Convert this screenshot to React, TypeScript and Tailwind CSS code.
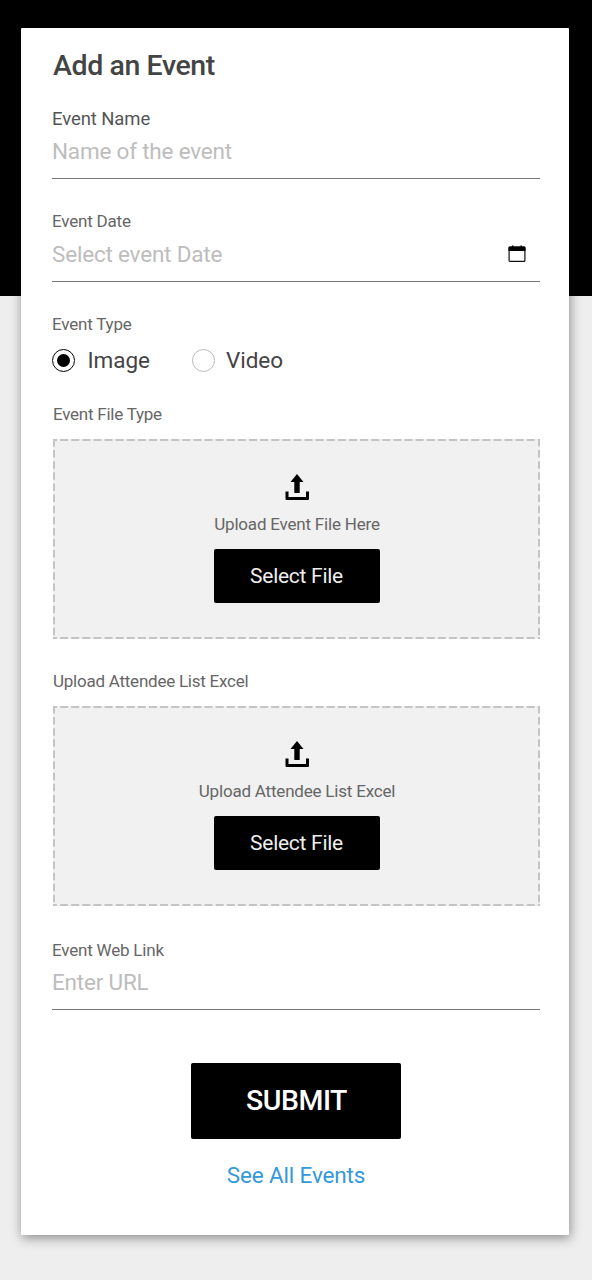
import React from "react";

function Field({ label, placeholder, children, labelClass }: { label: string; placeholder: string; labelClass: string; children?: React.ReactNode }) {
  return (
    <div className="h-[103px]">
      <div className={labelClass}>{label}</div>
      <div className="mt-[4px] flex h-[44px] items-start justify-between border-b border-[#777] pr-[14px]">
        <span className="text-[22.5px] leading-[32px] tracking-[-0.2px] text-[#bdbdbd]">{placeholder}</span>
        {children}
      </div>
    </div>
  );
}

function Upload({ label, caption }: { label: string; caption: string }) {
  return (
    <div className="h-[267px]">
      <div className="pl-px text-[17px] leading-6 tracking-[-0.24px] text-[#666]">{label}</div>
      <div className="relative mt-[13px] ml-px flex h-[200px] w-[487px] flex-col items-center bg-[#f1f1f1] pt-[35px]">
        <svg className="absolute inset-0 h-full w-full" fill="none">
          <path d="M0 1H487M0 199H487" stroke="#c4c4c4" strokeWidth="2" strokeDasharray="8 3.110" strokeDashoffset="4" />
          <path d="M1 0V200M486 0V200" stroke="#c4c4c4" strokeWidth="2" strokeDasharray="7.500 3.610" />
        </svg>
        <svg width="26" height="27" viewBox="0 0 26 27" fill="#000">
          <path d="M13 0L19.5 8H15.7V19H10.3V8H6.5ZM1.500 17.500H4.500V23H22V17.500H25V25Q25 26 24 26H2.500Q1.500 26 1.500 25Z" />
        </svg>
        <div className="mt-[11px] pl-px text-[17px] leading-6 tracking-[-0.2px] text-[#666]">{caption}</div>
        <button className="mt-[13px] h-[54px] w-[166px] rounded-[2px] bg-black pt-[2px] text-[21px] tracking-[-0.28px] text-[#eee]">Select File</button>
      </div>
    </div>
  );
}

export default function App() {
  return (
    <div className="h-[1280px] w-[592px] bg-[linear-gradient(#000_296px,#eee_296px)] px-[21px] pt-[28px] font-['Roboto',sans-serif]">
      <main className="h-[1207px] w-[548px] rounded-[1px] bg-white pl-[31px] pt-[20px] shadow-[1px_3px_12px_rgba(0,0,0,0.42)]">
        <div className="w-[488px]">
          <h1 className="pl-px text-[28.5px] leading-[36px] font-medium tracking-[-0.4px] text-[#444]">Add an Event</h1>
          <div className="pt-[23px]">
            <Field label="Event Name" placeholder="Name of the event" labelClass="text-[18.5px] leading-6 tracking-[-0.1px] text-[#555]" />
            <Field label="Event Date" placeholder="Select event Date" labelClass="-mt-px pb-px text-[17px] leading-6 tracking-[-0.2px] text-[#666]">
              <svg className="mt-[7px]" width="18" height="18" viewBox="0 0 18 18">
                <rect x="1.100" y="2.100" width="15.800" height="14.300" rx="1" fill="none" stroke="#111" strokeWidth="1.200" />
                <path d="M0.500 2.500Q0.500 1.500 1.500 1.500H4V0.500H5.500V1.500H12.500V0.500H14V1.500H16.500Q17.500 1.500 17.500 2.500V6H0.500Z" fill="#000" />
              </svg>
            </Field>
          </div>
          <div className="h-[90px]">
            <div className="text-[17px] leading-6 tracking-[-0.2px] text-[#666]">Event Type</div>
            <div className="mt-[8px] flex text-[22.500px] leading-8 tracking-[-0.05px] text-[#444]">
              <div className="flex w-[139.500px] items-center">
                <span className="mr-[12.500px] flex h-[23px] w-[23px] items-center justify-center rounded-full border border-black"><span className="h-[13px] w-[13px] rounded-full bg-black" /></span>Image
              </div>
              <div className="flex items-center">
                <span className="mr-[11.500px] h-[23px] w-[23px] rounded-full border border-[#bbb]" />Video
              </div>
            </div>
          </div>
          <Upload label="Event File Type" caption="Upload Event File Here" />
          <Upload label="Upload Attendee List Excel" caption="Upload Attendee List Excel" />
          <div className="pt-[2px]">
            <Field label="Event Web Link" placeholder="Enter URL" labelClass="text-[17px] leading-6 tracking-[-0.2px] text-[#666]" />
          </div>
          <div className="flex flex-col items-center pt-[22px]">
            <button className="h-[76px] w-[210px] rounded-[2px] bg-black pl-px text-[28.500px] font-medium tracking-[-0.5px] text-white">SUBMIT</button>
            <a className="mt-[20px] text-[22.500px] leading-8 tracking-[-0.15px] text-[#3498db]" href="#">See All Events</a>
          </div>
        </div>
      </main>
    </div>
  );
}
